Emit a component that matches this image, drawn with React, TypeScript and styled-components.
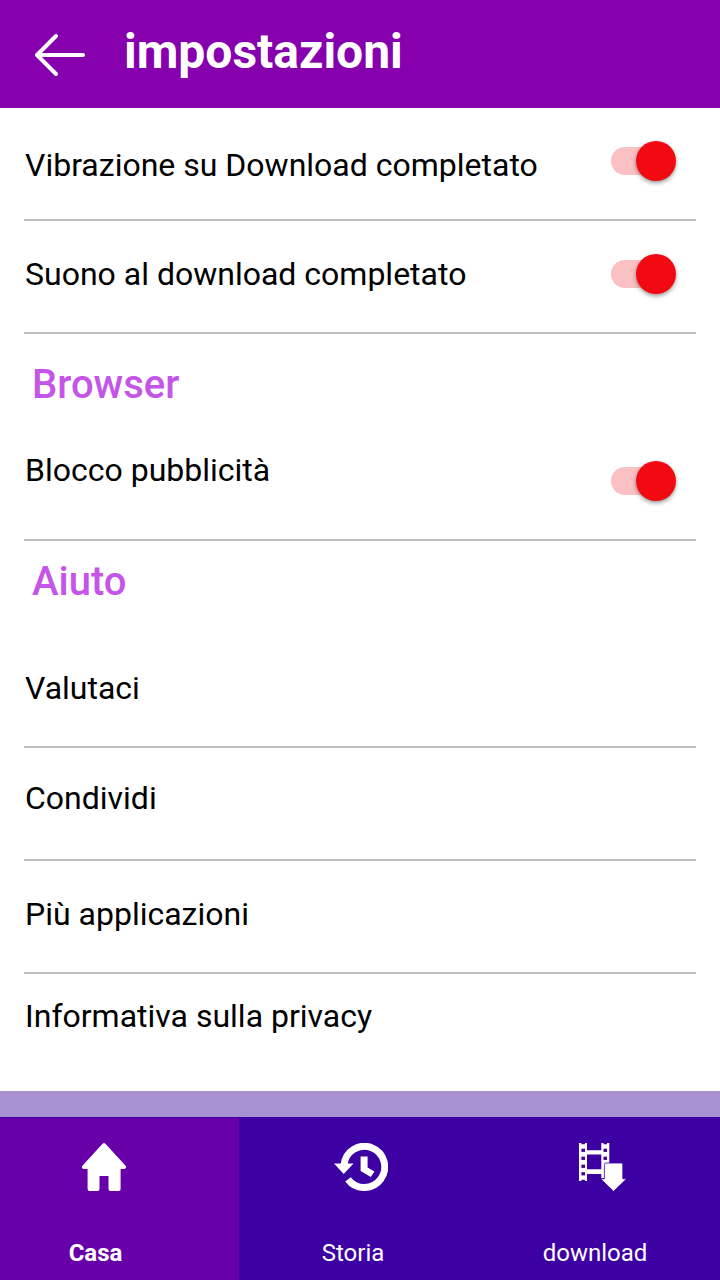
import React from "react";
import styled, { createGlobalStyle } from "styled-components";

const GlobalStyle = createGlobalStyle`
  *, *::before, *::after { box-sizing: border-box; }
  body {
    margin: 0;
    background: #fff;
    color: #000;
    font-family: Roboto, "Liberation Sans", sans-serif;
  }
`;

const Page = styled.div`
  display: flex;
  flex-direction: column;
  min-height: 100vh;
`;

const Header = styled.header`
  display: flex;
  align-items: center;
  gap: 38px;
  height: 108px;
  padding: 0 34px;
  background: #8600ae;
  color: #fff;
`;

const BackButton = styled.button`
  display: flex;
  padding: 2px 0 0;
  border: 0;
  background: none;
  color: inherit;
  cursor: pointer;
`;

const Title = styled.h1`
  margin: 0;
  padding-bottom: 4px;
  font-size: 48px;
  line-height: 56px;
  font-weight: 700;
`;

const Content = styled.main`
  flex: 1;
  padding: 0 24px;
`;

const SectionTitle = styled.h2<{ $tight?: boolean }>`
  margin: 0;
  height: 94px;
  padding: ${(p) => (p.$tight ? 17 : 27)}px 8px 0;
  font-size: 40px;
  line-height: 48px;
  font-weight: 500;
  color: #c455e8;
`;

const List = styled.ul`
  list-style: none;
  margin: 0;
  padding: 0;
`;

type Level = "high" | "raised" | "middle" | "low";
const levelPadding: Record<Level, number> = { high: 22, raised: 30, middle: 33, low: 37 };

const Row = styled.li<{ $level: Level; $last?: boolean }>`
  display: flex;
  justify-content: space-between;
  align-items: flex-start;
  height: 113px;
  border-bottom: ${(p) => (p.$last ? "0" : "2px solid #bdbdbd")};

  & > label,
  & > a {
    flex: 1;
    padding: ${(p) => levelPadding[p.$level]}px 0 0 1px;
    font-size: 32px;
    line-height: 40px;
    color: inherit;
    text-decoration: none;
  }
`;

const Switch = styled.input`
  appearance: none;
  display: grid;
  align-items: center;
  width: 65px;
  height: 40px;
  margin: 33px 20px 0 0;
  cursor: pointer;

  &::before,
  &::after {
    content: "";
    grid-area: 1 / 1;
  }
  &::before {
    width: 54px;
    height: 28px;
    border-radius: 14px;
    background: #d0d0d0;
  }
  &::after {
    width: 40px;
    height: 40px;
    border-radius: 50%;
    background: #f5f5f5;
    box-shadow: 0 2px 4px rgba(0, 0, 0, 0.4);
  }
  &:checked::before {
    background: #fbc0c3;
  }
  &:checked::after {
    justify-self: end;
    background: #f20a12;
  }
`;

const TabBar = styled.nav`
  display: grid;
  grid-template-columns: repeat(3, 1fr);
  height: 189px;
  border-top: 26px solid #a891d2;
  background: #3d00a2;
`;

const Tab = styled.a<{ $active?: boolean; $left?: number; $right?: number }>`
  display: flex;
  flex-direction: column;
  align-items: center;
  justify-content: space-between;
  margin: ${(p) => (p.$active ? "1px 1px 0 0" : "1px 0 0")};
  padding: 25px ${(p) => p.$right ?? 0}px 13px ${(p) => p.$left ?? 0}px;
  background: ${(p) => (p.$active ? "#6700a8" : "transparent")};
  color: #fff;
  text-decoration: none;
  font-weight: ${(p) => (p.$active ? 700 : 400)};
`;

const TabLabel = styled.span`
  padding-right: 16px;
  font-size: 24px;
  line-height: 28px;
`;

const BackIcon = () => (
  <svg width="52" height="44" viewBox="0 0 52 44" fill="none" stroke="currentColor" strokeWidth="4" strokeLinecap="round" strokeLinejoin="round" aria-hidden="true">
    <path d="M49 22H3M22 3L3 22L22 41" />
  </svg>
);

const HomeIcon = () => (
  <svg width="44" height="48" viewBox="0 0 44 48" fill="#fff" aria-hidden="true">
    <path d="M20.6 .7Q22 -.6 23.4 .7L43.4 22.4Q44.6 24 43.6 25.2Q43.2 26 42 26H38.6V46Q38.6 48 36.6 48H28.5Q26.5 48 26.5 46V33H17.5V46Q17.5 48 15.5 48H7.6Q5.6 48 5.6 46V26H2Q.8 26 .4 25.2Q-.6 24 .6 22.4Z" />
  </svg>
);

const HistoryIcon = () => (
  <svg width="54" height="48" viewBox="0 0 54 48" aria-hidden="true">
    <path d="M10 22A20.4 20.6 0 1 1 14 36.3" fill="none" stroke="#fff" strokeWidth="7" />
    <path d="M0 20.5H19.5L9.7 31Z" fill="#fff" />
    <path d="M26.6 13.6H33.6V24.6L40.4 28.4L36.8 34L26.6 28Z" fill="#fff" />
  </svg>
);

const leftHoles = [5.7, 13.7, 21.7, 29.2];
const rightHoles = [5.7, 13.7];

const DownloadIcon = () => (
  <svg width="48" height="48" viewBox="0 0 48 48" aria-hidden="true">
    <path d="M0 0H2.4V1.3H6V0H8V7.2H22.3V0H24.5V1.3H28V0H30.3V35H22.3V31H8V38H6V36.8H2.4V38H0ZM8 11.6V26.2H22.3V11.6Z" fill="#fff" fillRule="evenodd" />
    {leftHoles.map((y) => (
      <rect key={y} x="2.4" y={y} width="3.6" height="3.2" fill="#3d00a2" />
    ))}
    {rightHoles.map((y) => (
      <rect key={y} x="24.5" y={y} width="3.5" height="3.2" fill="#3d00a2" />
    ))}
    <path d="M27 20H42.2Q43.8 20 43.8 21.6V35.8H47.6L34.6 48.4L21.6 35.8H25.4V21.6Q25.4 20 27 20Z" fill="#fff" stroke="#3d00a2" strokeWidth=".8" />
  </svg>
);

const SwitchRow = ({ id, label, level }: { id: string; label: string; level: Level }) => (
  <Row $level={level}>
    <label htmlFor={id}>{label}</label>
    <Switch id={id} type="checkbox" role="switch" defaultChecked />
  </Row>
);

const LinkRow = ({ label, level, last }: { label: string; level: Level; last?: boolean }) => (
  <Row $level={level} $last={last}>
    <a href="#">{label}</a>
  </Row>
);

export default function App() {
  return (
    <Page>
      <GlobalStyle />
      <Header>
        <BackButton type="button" aria-label="Indietro">
          <BackIcon />
        </BackButton>
        <Title>impostazioni</Title>
      </Header>
      <Content>
        <List>
          <SwitchRow id="vibration" label="Vibrazione su Download completato" level="low" />
          <SwitchRow id="sound" label="Suono al download completato" level="middle" />
        </List>
        <SectionTitle>Browser</SectionTitle>
        <List>
          <SwitchRow id="adblock" label="Blocco pubblicità" level="high" />
        </List>
        <SectionTitle $tight>Aiuto</SectionTitle>
        <List>
          <LinkRow label="Valutaci" level="middle" />
          <LinkRow label="Condividi" level="raised" />
          <LinkRow label="Più applicazioni" level="middle" />
          <LinkRow label="Informativa sulla privacy" level="high" last />
        </List>
      </Content>
      <TabBar>
        <Tab href="#casa" $active $right={32} aria-current="page">
          <HomeIcon />
          <TabLabel>Casa</TabLabel>
        </Tab>
        <Tab href="#storia" $left={2}>
          <HistoryIcon />
          <TabLabel>Storia</TabLabel>
        </Tab>
        <Tab href="#download" $left={6}>
          <DownloadIcon />
          <TabLabel>download</TabLabel>
        </Tab>
      </TabBar>
    </Page>
  );
}
